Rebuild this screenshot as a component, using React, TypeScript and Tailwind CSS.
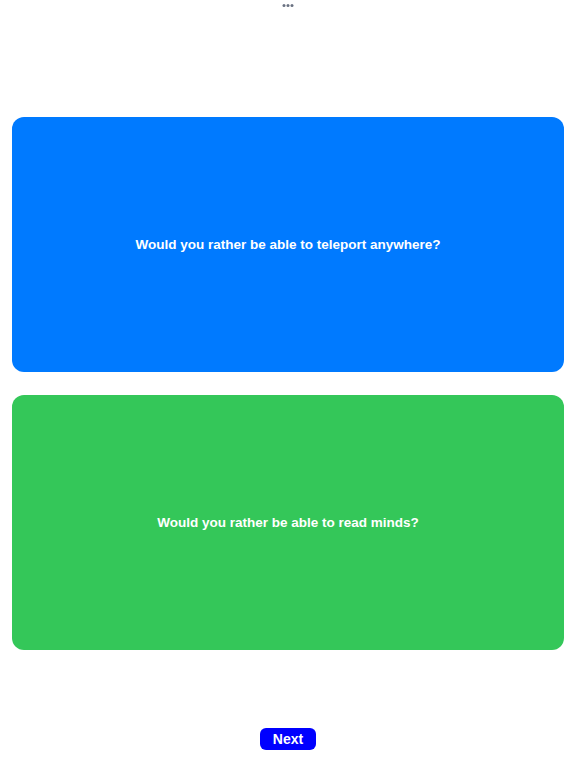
export default function App() {
  return (
    <div
      className="relative flex h-[768px] w-full flex-col bg-white"
      style={{ fontFamily: '"Liberation Sans", Arial, sans-serif' }}
    >
      {/* top multitasking dots */}
      <div className="absolute left-1/2 top-[4px] flex -translate-x-1/2 gap-[1px]">
        <span className="h-[3px] w-[3px] rounded-full bg-gray-500" />
        <span className="h-[3px] w-[3px] rounded-full bg-gray-500" />
        <span className="h-[3px] w-[3px] rounded-full bg-gray-500" />
      </div>

      <div className="flex flex-col gap-[23px] px-3 pt-[117px]">
        <button className="flex h-[255px] items-center justify-center rounded-[12px] bg-[#007aff] pt-[2px] text-[13.5px] font-bold text-white">
          Would you rather be able to teleport anywhere?
        </button>
        <button className="flex h-[255px] items-center justify-center rounded-[12px] bg-[#34c759] pt-[2px] text-[13.5px] font-bold text-white">
          Would you rather be able to read minds?
        </button>
      </div>

      <div className="mt-[78px] flex justify-center">
        <button className="flex h-[22px] w-[56px] items-center justify-center rounded-[6px] bg-[#0000ff] pt-[1px] text-[14px] font-bold text-white">
          Next
        </button>
      </div>
    </div>
  );
}
